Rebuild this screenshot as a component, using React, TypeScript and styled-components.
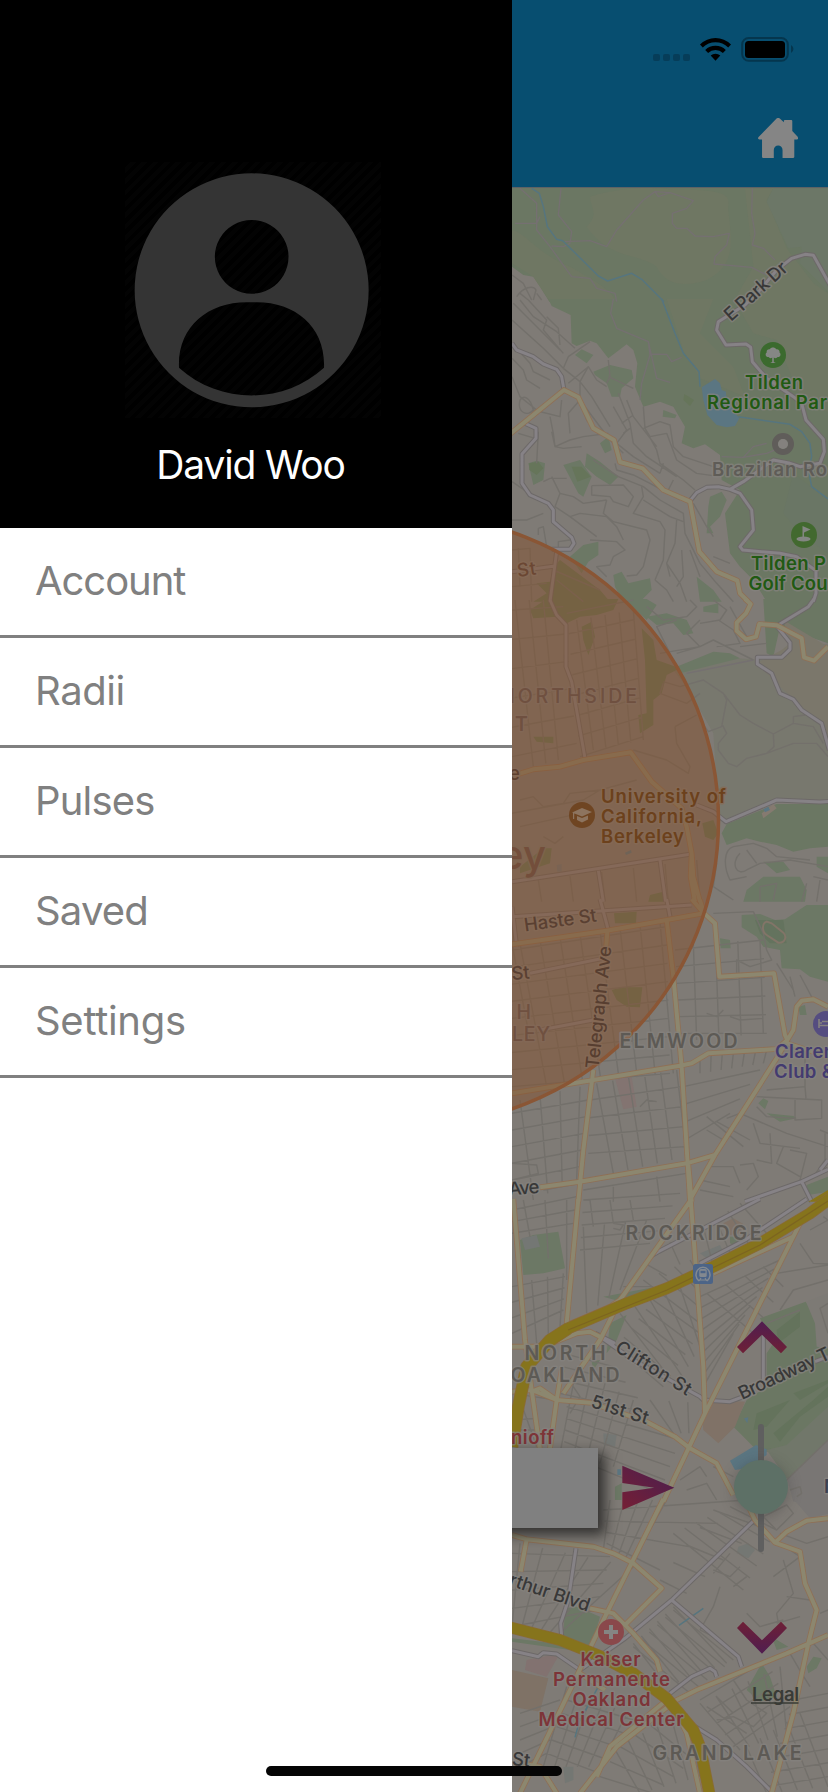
import React from "react";
import styled, { createGlobalStyle } from "styled-components";

const GlobalStyle = createGlobalStyle`
  * { box-sizing: border-box; }
  body { margin: 0; background: #fff; font-family: Inter, "Liberation Sans", sans-serif; }
`;

const Screen = styled.div`
  position: relative;
  display: flex;
  width: 828px;
  height: 1792px;
  overflow: hidden;
`;

const Drawer = styled.nav`
  width: 512px;
  flex: none;
  background: #fff;
`;

const Profile = styled.header`
  display: flex;
  flex-direction: column;
  align-items: center;
  height: 528px;
  padding: 161.7px 6px 0 0;
  background: #000;
`;

const Avatar = styled.svg`
  display: block;
  width: 256px;
  height: 256px;
  background: repeating-linear-gradient(135deg, #000 0 4px, #030303 4px 8px);
`;

const UserName = styled.div`
  margin: 22.5px 5px 0 0;
  color: #fff;
  font-size: 39px;
  line-height: 50px;
  letter-spacing: -1.15px;
`;

const MenuItem = styled.a<{ $tracking: number }>`
  display: flex;
  align-items: center;
  height: 110px;
  padding: 0 0 3px 35px;
  border-bottom: 3px solid #808080;
  color: #808080;
  font-size: 40px;
  letter-spacing: ${(p) => p.$tracking}px;
`;

const Main = styled.main`
  display: flex;
  flex-direction: column;
  flex: 1;
  min-width: 0;
`;

const TopBar = styled.header`
  display: flex;
  flex-direction: column;
  align-items: flex-end;
  height: 188px;
  padding: 36px 30px 0 0;
  background: #074e70;
  border-bottom: 1px solid #5d6265;
`;

const StatusIcons = styled.svg`
  display: block;
  width: 150px;
  height: 28px;
`;

const HomeIcon = styled.svg`
  display: block;
  width: 40px;
  height: 40px;
  margin-top: 54px;
`;

const MapArea = styled.section`
  position: relative;
  flex: 1;
  overflow: hidden;
  background: #7f7b76;
`;

const MapDrawing = styled.svg`
  display: block;
  width: 316px;
  height: 1604px;
  font-family: Inter, "Liberation Sans", sans-serif;
`;

const MessageBox = styled.div`
  position: absolute;
  left: -60px;
  top: 1260px;
  width: 146px;
  height: 80px;
  background: #808080;
  box-shadow: 6px 6px 12px 1px rgba(20, 20, 20, 0.7);
`;

const SendIcon = styled.svg`
  position: absolute;
  left: 110px;
  top: 1277px;
  width: 53px;
  height: 46px;
`;

const ZoomControl = styled.div`
  position: absolute;
  left: 223px;
  top: 1133px;
  width: 54px;
  display: flex;
  flex-direction: column;
  align-items: center;
`;

const Chevron = styled.svg<{ $gap: number }>`
  display: block;
  width: 50px;
  height: 33px;
  margin: ${(p) => p.$gap}px 0 0 0;
`;

const Track = styled.div`
  display: flex;
  justify-content: center;
  align-items: center;
  width: 6px;
  height: 128px;
  margin: 70px 2px 0 0;
  border-radius: 3px;
  background: #5f5f5f;
`;

const Thumb = styled.div`
  flex: none;
  width: 54px;
  height: 54px;
  margin: -2px 1px 0 0;
  border-radius: 50%;
  background: #5d7066;
  box-shadow: 0 2px 14px rgba(50, 50, 50, 0.35);
`;

const HomeIndicator = styled.div`
  position: absolute;
  left: 266px;
  top: 1766px;
  width: 296px;
  height: 10px;
  border-radius: 5px;
  background: #050505;
`;

/* Evenly spaced streets running from segment a-b to segment c-d. */
const grid = (
  ax: number, ay: number, bx: number, by: number,
  cx: number, cy: number, dx: number, dy: number, n: number
) => {
  let d = "";
  for (let i = 0; i < n; i++) {
    const t = n === 1 ? 0 : i / (n - 1);
    d += `M${ax + (bx - ax) * t},${ay + (by - ay) * t}L${cx + (dx - cx) * t},${cy + (dy - cy) * t}`;
  }
  return d;
};

type Fill = [string, string];
interface TileData {
  y: number;
  areas: Fill[];
  minor: string;
  path?: string;
  water?: string;
  white: string;
  orange: string;
}

const PARK = "#6b7763";
const PARK_LIGHT = "#6f7763";
const PATCH = "#6c7865";
const WATER = "#5b7682";

const tiles: TileData[] = [
  {
    y: 0,
    areas: [
      [PARK, "M30,555H990V905H148L120,860 100,830 70,825 36,800 30,795Z"],
      [PARK_LIGHT, "M270,590C330,570 420,560 470,565C600,575 700,560 684,620C690,700 720,790 620,840C560,860 500,860 470,800C420,760 330,780 260,680C300,640 270,620 270,590Z"],
      [PARK_LIGHT, "M735,565H820L800,600 860,745 940,850 984,880V905H700L760,800Z"],
      ["#6c7767", "M820,565H990V880L900,790 905,740 865,745 800,605Z"],
      [PARK_LIGHT, "M36,690C80,700 110,760 210,800C300,850 330,870 350,905H150L100,830 36,790Z"],
    ],
    minor: "M36,825L70,850 95,900M50,890C70,860 100,855 108,870L100,900M60,880L85,900M110,880L125,900",
    path: "M60,565L110,610V690L150,740 215,830 270,835 290,865 345,880 350,905M45,670H110L120,650M183,565L175,645 215,695 210,730 190,740 155,738M195,725L270,722 320,740 350,690 430,600 465,575 510,578 580,602 560,625 517,640V670L530,685H560L585,708 640,710 688,700 680,735 645,770 642,792 755,802 800,825M465,575L475,590 510,578M757,565L755,640 765,700 757,735 790,745 825,780",
    water: "M95,565L118,580 130,620 142,680 170,718 188,722 295,828 323,843 395,820 425,838 492,905",
    white: "M780,870L830,810 875,775 915,763 940,766 990,855",
    orange: "",
  },
  {
    y: 300,
    areas: [
      [PARK, "M145,-3L155,18 212,45 215,130 230,138 270,122 290,130 325,175 380,133 400,150 412,190 405,260 430,320 480,305 520,320 555,380 545,430 580,445 615,433 660,465 665,540 720,570 675,640 690,760 720,800 760,840 800,905H990V-3Z"],
      [PARK_LIGHT, "M500,-3H640L600,100 700,200 735,290 600,235 550,150Z"],
      [PARK_LIGHT, "M700,-3H990V340L900,290 830,120 760,100Z"],
      ["#6a7665", "M880,520L984,600V760L900,700 850,640Z"],
      [PATCH, "M225,165L245,148 280,165 260,190ZM280,215L330,195 395,210 400,235 365,265 360,290 335,290 320,250 285,225Z"],
      [PATCH, "M85,490L110,482 135,490 130,540 100,555ZM190,495L240,480 275,530 250,590 235,580ZM260,460L300,485 355,530 330,555 290,530 255,500ZM300,430L325,410 335,450 315,460Z"],
      [PATCH, "M210,770L250,735 295,725 295,765 265,785 245,820ZM340,825L365,815 385,850 450,835 455,870 420,905H370L345,860ZM590,830L640,870 665,905H600Z"],
      [PATCH, "M630,590L665,575 680,600 660,650 630,680 640,700 620,700 625,620ZM490,330L530,345 525,355 488,350Z"],
      ["#66755a", "M215,500L245,500 272,530 232,545ZM553,282L582,300 570,318 550,300ZM88,490L115,485 130,505 110,525 88,510Z"],
      ["#66755a", "M160,800L180,780 300,870 330,905H100L140,880 110,850 150,845Z"],
      [WATER, "M605,262L645,237 660,250 665,270 678,275V285L710,345 718,355 705,378 680,382 650,375 622,345 610,300Z"],
    ],
    minor:
      "M85,0L140,60 130,90 190,160M40,10L180,150M36,60L130,145 190,205M36,130L90,190 100,215 150,240M36,175L70,210 80,240 120,265M60,0L100,50 170,95 225,145M140,50L175,85 180,135M190,205L205,170 270,125M190,205L240,245 275,290 330,380M205,250L265,200 290,240 320,260M265,200L240,245V300L330,420M240,300L205,340 210,400M36,230L60,290 110,330M60,300C50,340 85,350 100,330C90,290 70,285 60,300M100,330L180,350 185,300M150,350L160,400 165,440 210,420 250,410 325,400M55,400L105,415M115,395L110,490M155,395L165,440 190,445 245,440M245,320L260,360 275,380M325,180L330,230 320,250M325,230L400,265M355,280L390,370 400,430M380,300L400,350 470,440M340,320L380,390 350,430M430,320L435,385 470,450M430,385L480,365 510,375 520,440 550,470 640,500M435,385L450,410 500,400M500,400L530,480 590,520 660,530M365,370L400,345M370,400L390,385M470,450L480,490 550,540 585,570M400,430L440,470 530,530M330,420L370,460M350,430L400,470 480,520M480,520L490,490M505,570L520,540M345,490L350,510 400,525 450,550 540,600M280,480L355,530 430,560 480,600 550,640 555,700 600,790M275,557L370,555 400,590 385,620 340,605 330,590 275,585V557M155,530L180,580 220,590 250,610 320,600M130,545L150,535 200,535M180,580L165,620 210,650 290,710M210,650L240,640 320,650 350,680 370,720M320,600L310,640 340,665 440,690 450,720 430,800 410,825 380,828M270,720L350,725 375,750 340,770 330,795 290,800 320,830M425,560L430,590 400,640 480,665 495,690 490,780 465,840M430,600L510,650 550,665M530,660L525,730 500,790 510,830M545,750L550,830 530,860M570,750L600,830M500,790L540,850 560,905M465,840L500,870 520,905M580,610L620,680 640,710M600,790L650,850 700,905M640,770L690,790M36,660H80L130,640M36,545L80,575M115,685L130,680 140,740M115,705V685M175,740V725L210,720M36,750L90,745 95,905M36,860L140,850M55,745L60,860M160,810L300,870M170,840L250,905",
    path: "M340,-3L332,40 350,85 445,125 450,165 425,250 420,300M445,125L470,235 510,247M450,162L500,163 515,185 545,172M665,470L730,472 760,440 800,430M730,472L800,460 850,440",
    water: "M485,-3L525,100 550,160 597,215 600,260M715,350L870,373 905,395 930,430 935,470 925,510 935,560 984,597",
    white:
      "M800,-50L735,15 655,65 650,90 678,135 738,132 752,142 757,185 800,235 880,290 905,310 918,360 970,418 973,455 960,490 900,500 870,490 820,480 730,545 690,568 655,560 620,562 590,578 568,605M690,568L720,580 755,630 760,690 720,740 728,750 840,760 890,770 948,812V880L940,905M36,130L50,150 100,170 130,192 170,208 185,230 192,270M75,370L108,385V415L66,462V550L90,585 145,610 160,630V665L215,712 222,730 210,748H155M170,755L150,905M36,815L165,798",
    orange: "M30,402L192,270 235,292 280,385 342,420 360,486 428,505 490,570 570,605 598,755 650,815 712,842 720,880 745,905",
  },
  {
    y: 600,
    areas: [
      [PARK, "M790,-3H990V132L840,80 820,170 800,160Z"],
      ["#78786e", "M520,210L630,185 710,175 800,180 984,130V612L840,600 680,665 655,640 640,400 560,260Z"],
      ["#7b776b", "M850,60L984,140V430L960,370 830,250 770,190 845,150 870,130Z"],
      [PARK, "M665,700L680,672 830,612 984,612V740L930,745 880,755 830,735 780,725 740,715 680,735Z"],
      [PATCH, "M375,-3L440,-3 470,15 440,60ZM440,50L500,40 560,60 580,100 550,105 520,70 470,75ZM610,20L655,10V40L610,35ZM530,200L640,155 690,160 720,175 600,205 540,220Z"],
      [PATCH, "M790,830L900,830 920,870 915,905H730L740,870ZM790,785L850,785 870,810 830,820ZM950,770H984V820L950,800Z"],
      ["#66755a", "M425,85L460,120 470,180 540,205 500,225 485,280 460,300V375L420,400 415,345 440,340 435,180ZM90,30L140,-3H355L340,30 290,45 240,50 200,70 170,50 100,55ZM245,80L275,65 285,110 265,165 250,120ZM100,410L160,410V430L110,425ZM607,670L640,660 655,700 640,720 615,710ZM130,745H155L150,790 60,820V800ZM450,885L490,875V905H445Z"],
      ["#857a70", "M785,640L820,612 830,625 790,655Z"],
      [WATER, "M790,628L805,620 810,630 795,637ZM375,758L393,750 395,758 378,765Z"],
      ["#70777b", "M170,795L185,792V815H172Z"],
    ],
    minor:
      grid(36, 30, 36, 470, 190, 20, 230, 430, 6) +
      grid(200, 40, 240, 470, 400, 0, 430, 410, 8) +
      grid(45, 0, 130, 0, 100, 500, 175, 480, 3) +
      grid(230, 60, 400, 30, 280, 450, 430, 420, 5) +
      grid(115, 840, 590, 780, 125, 905, 600, 905, 6) +
      "M530,60L470,80 510,160M440,20L490,60 560,50 590,20 570,0M600,60L560,100 600,140 530,160M640,0L680,30 660,60 600,70M655,60L700,90 720,130 650,140M690,20L740,110M480,160L600,140 640,120 760,180M720,140L800,130M490,250L480,280 560,310 600,280M490,245L540,260 610,240 670,280 680,300 665,380 625,395 600,360M670,280L720,345 760,370 820,402 880,370V350L915,345M820,402L822,440 800,460 740,475 710,500 685,490 655,450V430L680,400 665,370M880,370L940,380 970,430M800,460L880,430H950L984,470M525,380L590,345M525,380L530,430 570,500 565,520 500,480 400,450M36,640L250,600 300,570 410,540M60,600L100,590 130,620 190,610 210,580 300,570M60,680L240,640M130,710L165,730 190,710M700,740C670,750 670,800 690,840L740,830M700,740L760,730 800,745M720,760C690,790 710,830 740,810L780,790 870,780 984,800M740,750L770,790M800,745L830,770 930,780M650,790L640,860 700,900M780,860L830,850 820,900M780,905V860M920,850L905,905M940,830L984,840M960,840L950,905",
    path: "M560,220L760,180",
    white:
      "M942,-3L925,20 830,78 870,128 870,148 845,172H772V192L815,220 840,280 880,298 905,330 965,370 988,450M590,615L640,635 678,665 830,600 960,606 990,604M150,0L170,45 198,75V200L215,245 255,475M36,845L300,805 575,762M295,812L310,905M480,780L497,905",
    orange:
      "M735,-3L752,12 738,40 710,68V92L738,118 768,110 778,72 830,76 905,115 912,172 942,182 984,140M36,528L100,508 180,500 250,480 392,457 455,545 545,625 560,680 575,760 580,830 600,905M575,760L572,830 585,905",
  },
  {
    y: 900,
    areas: [
      [PATCH, "M725,45L780,42 825,60 855,58 920,15 984,15V245L930,230 900,208 845,205 840,150 790,140 770,110 725,82Z"],
      ["#64735e", "M765,60L850,60 860,130 810,130 780,100Z"],
      [PATCH, "M660,115L690,120 692,145 662,145ZM775,610L790,595 805,603 795,628ZM800,640L880,648 890,655 840,665ZM920,855L984,830V875L925,885ZM895,320L915,315 920,345 900,345Z"],
      ["#66755a", "M342,40L410,35 408,70 345,70ZM335,270L365,262H427L420,322 380,320 350,300Z"],
      ["#837471", "M345,535L395,530 410,620 370,628Z"],
    ],
    minor:
      grid(36, 150, 36, 560, 500, 80, 510, 520, 9) +
      grid(60, 130, 480, 65, 140, 560, 520, 520, 8) +
      grid(36, 640, 36, 840, 265, 600, 240, 800, 5) +
      grid(60, 600, 240, 560, 100, 900, 230, 840, 4) +
      grid(290, 550, 530, 510, 340, 820, 560, 770, 6) +
      grid(270, 600, 265, 760, 545, 560, 555, 740, 4) +
      grid(525, 150, 540, 400, 790, 120, 800, 400, 6) +
      grid(580, 130, 780, 120, 590, 420, 790, 400, 4) +
      grid(600, 470, 800, 450, 600, 520, 790, 490, 7) +
      grid(550, 560, 555, 720, 780, 510, 690, 640, 4) +
      "M36,130L60,260 90,420M640,40L760,35M760,35L790,100 800,150 815,180 750,200 710,180V225M830,190L880,270M900,225L940,300M870,230L885,290M690,350L720,360 790,355M620,340L650,350 670,330M800,570L915,560 918,595M915,440V560M770,590L965,600V655L885,660V600M885,655L800,650 770,620M620,650L730,740M650,665L750,720M680,655L720,640 860,700 984,740M760,670L780,730 900,745M810,700L815,790 770,780M720,795L760,790 775,830 740,870M850,740L830,790 900,830M870,750L920,760 900,840M960,690L984,700M975,700V780L940,830M620,800L700,800 720,850M600,840L690,860M36,790L110,795 115,820 36,840M420,620L440,600 470,605M620,690L670,720M130,870L240,850M600,870L700,890M250,870L560,820M340,860V905M470,830L480,905",
    white:
      "M300,-3L325,90M500,-3L510,50M36,50L575,15M90,220L310,175M120,390L280,360M36,20L50,140M984,808L905,845 735,905M905,845L935,905M960,810L984,780",
    orange:
      "M36,133L320,92 500,60 612,40 645,70 658,230 822,220 838,310 855,405 862,420M575,-3L612,40 600,0M500,60L520,230 545,500 570,905M322,95L318,150M36,580L280,540 540,497 575,490 625,460 830,447 862,420 880,390 890,320 905,302 940,298 984,320M862,420L830,475 645,765 575,890M862,430L984,470M280,510L250,750 235,905M120,862L240,845 560,790 645,765M565,795L575,905",
  },
  {
    y: 1200,
    areas: [
      [PATCH, "M60,120L100,105 175,95 195,205 130,220 70,225ZM310,290L460,262 470,280 380,310ZM330,370L380,345 350,420 320,460ZM690,110L720,110 715,140 690,130ZM275,485L300,480 280,510Z"],
      ["#6b7763", "M780,355L917,305 950,350 955,430 984,445V665L860,740 800,755 760,740 720,700 700,680 740,600 800,560V460L820,430Z"],
      ["#7d7a75", "M918,305L984,280V445L950,440 945,370Z"],
      ["#71776a", "M984,620V840L860,835 800,750 860,735Z"],
      ["#797674", "M990,715L862,838 880,905H990Z"],
      ["#64735c", "M830,390L900,335 900,380 835,430ZM770,640L870,600 800,680 760,690ZM820,700L940,600 984,560V590L900,650 840,725ZM880,580L984,540V550L900,600Z"],
      ["#807267", "M605,630L640,600 735,605 705,680 655,730 610,690ZM670,70L700,55 735,75 720,100 690,105Z"],
      [WATER, "M690,782L768,735 800,748V765L740,805 705,810ZM732,655L745,652 742,670ZM352,808H363V825H352Z"],
      ["#747774", "M310,700L350,705 345,740 312,735ZM600,160L660,135 670,155 620,175ZM65,115L110,105 120,140 75,150Z"],
      [PATCH, "M345,860L365,850V900H345Z"],
    ],
    minor:
      grid(36, 30, 36, 100, 230, -10, 220, 70, 3) +
      grid(70, 0, 200, 0, 90, 110, 200, 240, 3) +
      grid(250, 0, 240, 150, 540, -20, 450, 130, 5) +
      grid(250, 80, 440, 60, 260, 340, 360, 270, 4) +
      grid(270, 0, 390, 0, 280, 80, 400, 60, 3) +
      grid(36, 260, 36, 400, 195, 230, 190, 330, 4) +
      grid(95, 240, 190, 220, 110, 430, 180, 380, 3) +
      grid(430, 240, 570, 180, 600, 370, 600, 230, 4) +
      grid(360, 340, 540, 260, 530, 560, 600, 440, 5) +
      grid(460, 300, 350, 440, 600, 400, 490, 560, 6) +
      grid(580, 60, 370, 260, 580, 160, 460, 260, 4) +
      grid(600, 290, 610, 560, 840, 180, 700, 400, 9) +
      grid(620, 280, 790, 200, 760, 400, 850, 260, 4) +
      grid(190, 460, 180, 580, 340, 500, 450, 640, 4) +
      grid(200, 620, 190, 760, 540, 720, 480, 880, 5) +
      grid(230, 500, 400, 600, 180, 760, 340, 800, 5) +
      grid(450, 600, 620, 610, 520, 700, 590, 700, 4) +
      grid(610, 80, 720, 10, 640, 200, 800, 100, 4) +
      "M36,580L100,590 170,600M60,600L110,740M830,220L984,195M900,130L940,190 984,192M840,330L880,270 984,240M800,370L900,330M930,90L984,60 970,50M640,800L700,830M540,840L600,800 620,830M560,870L620,850 650,900M860,840L984,720M870,870L900,860 905,880 890,890M984,310L960,325 984,400M40,660L110,655M40,690L115,690M220,560L240,590 210,640M340,70L370,75 360,90 340,85",
    white: "M475,155L780,-3M475,155L450,170M600,190L735,120 920,-3M285,400L345,430M285,400L400,480 600,590 610,600 690,605 730,590M790,400V540M945,485L984,470",
    orange:
      "M40,-3L75,420 95,570 120,750M235,-3L200,370M575,-3L360,300 300,420 190,580M572,-3L610,500 615,640 490,905M200,375L330,320 360,300M36,440H130L230,400 270,395 300,410M36,575L95,570 170,600 270,608 440,665 525,710 570,745 650,790 700,885M95,575L120,565 170,600 150,745M170,600L185,510M905,60L880,110 640,220M880,110L770,330 615,640",
  },
  {
    y: 1500,
    areas: [
      [PATCH, "M195,325L230,320 300,350 275,440 190,410ZM785,490L810,530 830,590 780,605 740,570ZM920,500L940,470 965,475 950,505 925,520ZM815,410L865,440 830,450ZM36,415L180,432 210,450 36,425Z"],
      ["#827270", "M80,480L180,460 140,530 75,510Z"],
      ["#7f7266", "M36,510L145,535 120,635 36,620Z"],
      ["#747773", "M715,140L745,130 765,150 745,175 710,160ZM190,800H220V840L195,850Z"],
      ["#797674", "M880,-3H990V40L930,55Z"],
    ],
    minor:
      grid(60, 130, 400, 200, 36, 380, 180, 400, 6) +
      grid(36, 160, 36, 380, 330, 170, 290, 330, 5) +
      grid(330, 0, 500, 0, 310, 150, 400, 180, 5) +
      grid(310, 30, 320, 130, 740, 0, 480, 210, 4) +
      grid(520, 100, 690, 20, 730, 270, 830, 90, 6) +
      grid(640, 30, 480, 240, 780, 80, 560, 280, 5) +
      grid(400, 430, 520, 320, 500, 560, 680, 490, 6) +
      grid(520, 330, 400, 440, 700, 480, 570, 580, 6) +
      grid(60, 640, 60, 800, 180, 600, 140, 760, 5) +
      grid(200, 560, 380, 640, 130, 800, 300, 800, 6) +
      grid(200, 600, 140, 760, 400, 660, 300, 820, 5) +
      grid(340, 740, 560, 640, 420, 880, 600, 830, 6) +
      grid(420, 650, 300, 830, 580, 780, 460, 880, 5) +
      grid(600, 610, 840, 500, 720, 750, 860, 700, 6) +
      grid(600, 600, 700, 740, 800, 480, 870, 620, 5) +
      grid(880, 600, 800, 860, 984, 580, 984, 830, 7) +
      grid(740, 740, 900, 640, 800, 880, 984, 860, 5) +
      "M790,50L830,90 880,40 860,15ZM840,100L920,130 984,110M870,150L900,170 820,230M850,180L880,280 830,340 840,400M740,340L780,380 850,360M640,210L690,230 720,200M690,160L640,220M740,230L700,260M600,390L640,320 660,260M600,390L660,420M900,350L830,370M860,290L930,300M960,340L984,330M940,430L984,480M870,460L905,520 930,560M700,540L740,600 800,640 760,680 700,650 650,660M650,590L700,640M620,620L740,700",
    water: "M537,376L610,325M225,712L238,665 295,560 330,520",
    white: "M228,145L205,300 182,370 185,410M765,58L515,300 375,415 240,510 170,462 130,458 115,470 36,452M515,300L715,470 725,500M510,580L575,530 630,505 645,515 650,530M545,655L650,720 740,800 820,880",
    orange:
      "M490,-3L320,340 215,560 60,880M36,105L80,118 280,140 340,160 400,190 485,265 375,375M80,118L62,215M735,-3L765,60 825,128 900,155 915,250 950,330 925,430 880,640 815,880M825,128L860,95 920,62 984,55M984,405L860,460 590,570 530,600 350,740 240,880M270,325L340,340 400,400 470,480 480,515M315,570L240,520M60,790L120,800 170,880M500,600L330,740 290,830M530,640L560,700 600,880",
  },
];

interface LabelData {
  t: string;
  x: number;
  y: number;
  c: string;
  w?: number;
  r?: number;
  s?: number;
  b?: number;
  halo?: string;
}

const GREEN = "#215a13";
const GREY = "#5d5a55";
const DARK = "#383838";
const RED = "#7d3438";
const BROWN = "#6c411c";
const TINT = "#6f5040";

const labels: LabelData[] = [
  { t: "E Park Dr", x: 731, y: 322, w: 78, r: -42, c: DARK, b: 500 },
  { t: "Tilden", x: 745, y: 388.5, w: 58, c: GREEN },
  { t: "Regional Par", x: 707, y: 409, w: 120, c: GREEN },
  { t: "Brazilian Ro", x: 712, y: 476, w: 115, c: "#5f5c57" },
  { t: "Tilden P", x: 751, y: 570, w: 75, c: GREEN },
  { t: "Golf Cou", x: 748.5, y: 590, w: 79, c: GREEN },
  { t: "St", x: 518, y: 577, w: 19, r: -8, c: "#6b4733", b: 500, halo: "#866a56" },
  { t: "NORTHSIDE", x: 500, y: 703, w: 137, s: 19.5, b: 500, c: TINT, halo: "#836857" },
  { t: "T", x: 515, y: 730.5, s: 19.5, c: TINT, halo: "#836857" },
  { t: "e", x: 509, y: 780, c: "#5e402f", b: 500, halo: "#836857" },
  { t: "University of", x: 601, y: 803, w: 125, c: BROWN, halo: "#866a54" },
  { t: "California,", x: 601, y: 823, w: 101, c: BROWN, halo: "#866a54" },
  { t: "Berkeley", x: 601, y: 843, w: 83, c: BROWN, halo: "#866a54" },
  { t: "ey", x: 500, y: 869, w: 46, s: 40, b: 500, c: "#734e3b", halo: "#7f6550" },
  { t: "Haste St", x: 525, y: 931.5, w: 73, r: -8, c: "#5a4032", b: 500, halo: "#866a56" },
  { t: "St", x: 512, y: 980, w: 18, r: -5, c: "#5a4032", b: 500, halo: "#866a56" },
  { t: "TH", x: 500, y: 1019, w: 31, s: 19.5, b: 500, c: TINT, halo: "#836857" },
  { t: "LEY", x: 512, y: 1041, w: 38, s: 19.5, b: 500, c: TINT, halo: "#836857" },
  { t: "Telegraph Ave", x: 598.5, y: 1069, w: 123, r: -84, c: "#573e30", b: 500, halo: "#866a56" },
  { t: "ELMWOOD", x: 619.5, y: 1048, w: 118, s: 19.5, c: GREY },
  { t: "Claren", x: 775, y: 1058, w: 60, c: "#433b70" },
  { t: "Club &", x: 774, y: 1077.5, w: 60, c: "#433b70" },
  { t: "Ave", x: 509, y: 1195.5, w: 31, r: -5, c: DARK, b: 500 },
  { t: "ROCKRIDGE", x: 625.5, y: 1239.5, w: 136, s: 19.5, c: GREY },
  { t: "NORTH", x: 524.5, y: 1360, w: 81, s: 19.5, c: GREY },
  { t: "OAKLAND", x: 510.5, y: 1382, w: 109, s: 19.5, c: GREY },
  { t: "Clifton St", x: 614, y: 1350.5, w: 86, r: 32, c: DARK, b: 500 },
  { t: "51st St", x: 590, y: 1407, w: 59, r: 17, c: DARK, b: 500 },
  { t: "Broadway T", x: 742, y: 1400, w: 99, r: -25, c: DARK, b: 500 },
  { t: "nioff", x: 511, y: 1444, w: 43, c: RED },
  { t: "N", x: 824, y: 1493, c: "#3a4050" },
  { t: "rthur Blvd", x: 508, y: 1585, w: 84, r: 18.5, c: DARK, b: 500 },
  { t: "Kaiser", x: 580.5, y: 1666, w: 60, c: RED },
  { t: "Permanente", x: 553, y: 1686, w: 117, c: RED },
  { t: "Oakland", x: 572.5, y: 1706, w: 78, c: RED },
  { t: "Medical Center", x: 538.5, y: 1726, w: 145, c: RED },
  { t: "GRAND LAKE", x: 652.5, y: 1760, w: 149, s: 19.5, c: GREY },
  { t: "St", x: 511.5, y: 1765, w: 18, r: 6, c: DARK, b: 500 },
];

const Layer = ({ pick, ...rest }: { pick: (t: TileData) => string | undefined } & React.SVGProps<SVGPathElement>) => (
  <>
    {tiles.map((t) => {
      const d = pick(t);
      return d ? (
        <path key={t.y} d={d} transform={`translate(500 ${t.y}) scale(.33333)`} fill="none" strokeLinejoin="round" {...rest} />
      ) : null;
    })}
  </>
);

const Highway = ({ color, width }: { color: string; width: number }) => (
  <g fill="none" stroke={color} strokeWidth={width} strokeLinejoin="round">
    <path d="M992,-6L930,40 780,130 640,200 500,265 380,310 205,385 140,430" transform="translate(500 1200) scale(.33333)" />
    <path d="M205,385L150,420 80,500 55,620 36,740" transform="translate(500 1200) scale(.33333)" strokeWidth={width + 2} />
    <path d="M30,382L180,420 300,468 400,520 500,595 580,690 600,740 630,890" transform="translate(500 1500) scale(.33333)" />
  </g>
);

const CityMap = () => (
  <MapDrawing viewBox="512 188 316 1604">
    {tiles.map((t) => (
      <g key={t.y} transform={`translate(500 ${t.y}) scale(.33333)`}>
        {t.areas.map(([fill, d], i) => <path key={i} fill={fill} d={d} />)}
      </g>
    ))}
    <Layer pick={(t) => t.minor} stroke="#73706b" strokeWidth={4.2} />
    <Layer pick={(t) => t.path} stroke="#757071" strokeWidth={4} />
    <Layer pick={(t) => t.water} stroke="#56757f" strokeWidth={4.5} />
    <Layer pick={(t) => t.white} stroke="#6d6968" strokeWidth={15} />
    <Layer pick={(t) => t.white} stroke="#868286" strokeWidth={9} />
    <Layer pick={(t) => t.orange} stroke="#8f7056" strokeWidth={17} />
    <Layer pick={(t) => t.orange} stroke="#8c876f" strokeWidth={12} />
    <g transform="translate(500 900) scale(.33333)" fill="none">
      <path d="M800,65C785,70 785,95 800,105L835,128C855,130 862,110 850,98L815,70Z" stroke="#827568" strokeWidth="6" />
      <path d="M925,905L984,870V905Z" fill="#87741c" />
    </g>
    <Highway color="#8a6b35" width={36} />
    <Highway color="#86741c" width={31} />
    <path d="M828,1201L760,1245 667,1290 568,1330" fill="none" stroke="#7c6420" strokeWidth="1.2" />
    <circle cx="414" cy="820.5" r="305" fill="#834f2c" fillOpacity=".5" />
    <circle cx="414" cy="820.5" r="304.5" fill="none" stroke="#8a5635" strokeWidth="3.5" />
    {labels.map((l, i) => (
      <text
        key={i}
        transform={`translate(${l.x} ${l.y}) rotate(${l.r ?? 0})`}
        fontSize={l.s ?? 18.5}
        fontWeight={l.b ?? 600}
        fill={l.c}
        stroke={l.halo ?? "#85827e"}
        strokeWidth="3"
        strokeOpacity=".75"
        strokeLinejoin="round"
        paintOrder="stroke"
        textLength={l.w}
      >
        {l.t}
      </text>
    ))}
    <text x="752" y="1701" fontSize="18.5" fontWeight="600" fill="#393b36" textLength="47">Legal</text>
    <path d="M751,1703H798.5" stroke="#393b36" strokeWidth="1.5" />
    {/* park */}
    <circle cx="773" cy="355" r="13" fill="#3b6a2e" />
    <path d="M772.200,362v-4.500c-1,1 -3,.8 -3.500,-.5c-3,.5 -4,-3 -2,-4.500c-.5,-2.500 1.500,-3.500 3,-3.200c1.300,-2.500 5.300,-2.500 6.600,0c2,-.3 3.700,1 3.200,3.200c2,1.500 1,5 -2,4.500c-.5,1.300 -2.500,1.500 -3.700,.5v4.500l2,1h-5.600z" fill="#858784" />
    {/* garden */}
    <circle cx="783" cy="444" r="8" fill="none" stroke="#605d5a" strokeWidth="6" />
    <circle cx="783" cy="444" r="5" fill="#84817e" />
    {/* golf course */}
    <circle cx="804" cy="535" r="13" fill="#42692f" />
    <path d="M802.500,526l8,3.500l-6.500,3v5.500h-1.500z" fill="#838682" />
    <ellipse cx="803.500" cy="539" rx="7" ry="2.500" fill="#838682" />
    {/* university */}
    <circle cx="582" cy="815" r="13" fill="#6f4522" />
    <path d="M572,812.500l10,-4.500l10,4l-10,4.500zM577,816l5,2l6,-2.500v4l-6,3l-5,-2.500zM573,813h1.200v6h-1.200z" fill="#8d745f" />
    {/* hotel */}
    <circle cx="826" cy="1024" r="13" fill="#554d80" />
    <path d="M819,1019v9M819,1025.500h10M822,1021.500h7v4M819,1023h3" stroke="#84817e" strokeWidth="1.600" fill="none" />
    {/* station */}
    <rect x="693" y="1264" width="20" height="20" rx="2.500" fill="#4c6487" />
    <path d="M699,1281a7,7.500 0 1 1 8,0" fill="none" stroke="#838990" strokeWidth="1.500" />
    <rect x="699.300" y="1269" width="7.400" height="8" rx="1.500" fill="#838990" />
    <path d="M700.500,1270.800h5v2.400h-5z" fill="#4c6487" />
    <path d="M701,1278l-2,3M705,1278l2,3M700,1280h6" fill="none" stroke="#838990" strokeWidth="1.200" />
    {/* hospital */}
    <circle cx="611" cy="1632" r="13" fill="#8a484b" />
    <path d="M611,1625v14M604,1632h14" stroke="#858583" strokeWidth="4" />
  </MapDrawing>
);

const ChevronIcon = ({ down, gap }: { down?: boolean; gap: number }) => (
  <Chevron $gap={gap} viewBox="0 0 150 97">
    <defs>
      <linearGradient id={down ? "berryDown" : "berryUp"} x1="0" y1={down ? 1 : 0} x2="0" y2={down ? 0 : 1}>
        <stop offset="0" stopColor="#501d50" />
        <stop offset="1" stopColor="#6e2036" />
      </linearGradient>
    </defs>
    <path
      d={down ? "M0,20L18,1 75,57 132,1 150,20 75,97Z" : "M75,0L150,77 132,96 75,40 18,96 0,77Z"}
      fill={`url(#${down ? "berryDown" : "berryUp"})`}
    />
  </Chevron>
);

const menu = [
  { label: "Account", tracking: -1.05 },
  { label: "Radii", tracking: -0.4 },
  { label: "Pulses", tracking: -0.8 },
  { label: "Saved", tracking: -0.8 },
  { label: "Settings", tracking: -0.3 },
];

export default function App() {
  return (
    <>
      <GlobalStyle />
      <Screen>
        <Drawer>
          <Profile>
            <Avatar viewBox="75 65 768 768">
              <path
                fillRule="evenodd"
                fill="#343434"
                d="M455,99A351,351 0 1 1 454.900,99ZM455,239A110.500,110.500 0 1 0 455.100,239ZM237,682C232,562 322,486 440,486H470C588,486 677,562 672,682C550,793 360,793 237,682Z"
              />
            </Avatar>
            <UserName>David Woo</UserName>
          </Profile>
          {menu.map((m) => <MenuItem key={m.label} $tracking={m.tracking}>{m.label}</MenuItem>)}
        </Drawer>
        <Main>
          <TopBar>
            <StatusIcons viewBox="648 36 150 28">
              {[653, 663, 673, 683].map((x) => (
                <rect key={x} x={x} y="54" width="7" height="7" rx="2" fill="#063d59" />
              ))}
              <path d="M700,44.500a22,22 0 0 1 31,0l-2.800,2.900a18,18 0 0 0 -25.400,0z" />
              <path d="M705.200,50a14.700,14.700 0 0 1 20.600,0l-2.900,3a10.600,10.600 0 0 0 -14.800,0z" />
              <path d="M710.700,55.600a7,7 0 0 1 9.600,0l-4.800,5.200z" />
              <rect x="742.200" y="38" width="45.600" height="22.800" rx="6.500" fill="none" stroke="#05364e" strokeWidth="2" />
              <rect x="745" y="41" width="40" height="17" rx="3.500" />
              <path d="M791,45a4.500,4.500 0 0 1 0,8z" fill="#05364e" />
            </StatusIcons>
            <HomeIcon viewBox="774 354 119 119">
              <path
                fill="#858585"
                d="M830,355Q834,352 838,355L851,367V362Q851,360 854,360H873Q876,360 876,363V393L892,410Q895,417 890,418H882V470Q882,473 878,473H847V449A13,13 0 0 0 821,449V473H790Q786,473 786,470V418H778Q772,417 775,411Z"
              />
            </HomeIcon>
          </TopBar>
          <MapArea>
            <CityMap />
            <MessageBox />
            <SendIcon viewBox="366 797 159 134">
              <defs>
                <linearGradient id="berrySend" x1="1" y1="0" x2="0" y2="1">
                  <stop offset="0" stopColor="#491f50" />
                  <stop offset="1" stopColor="#761f35" />
                </linearGradient>
              </defs>
              <path d="M367,797L523,863 367,930V877L463,863 367,849Z" fill="url(#berrySend)" />
            </SendIcon>
            <ZoomControl>
              <ChevronIcon gap={0} />
              <Track><Thumb /></Track>
              <ChevronIcon down gap={69} />
            </ZoomControl>
          </MapArea>
        </Main>
        <HomeIndicator />
      </Screen>
    </>
  );
}
